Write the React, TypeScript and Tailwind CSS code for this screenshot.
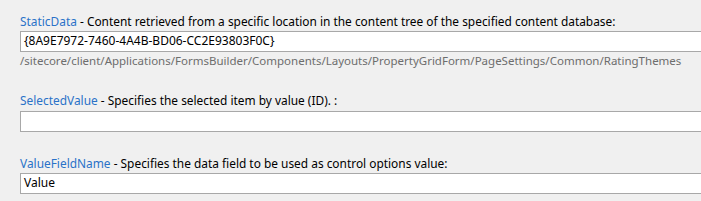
import React from 'react';

type Field = {
  name: string;
  description: string;
  value: string;
  hint?: string;
};

const fields: Field[] = [
  {
    name: 'StaticData',
    description: 'Content retrieved from a specific location in the content tree of the specified content database',
    value: '{8A9E7972-7460-4A4B-BD06-CC2E93803F0C}',
    hint: '/sitecore/client/Applications/FormsBuilder/Components/Layouts/PropertyGridForm/PageSettings/Common/RatingThemes',
  },
  {
    name: 'SelectedValue',
    description: 'Specifies the selected item by value (ID). ',
    value: '',
  },
  {
    name: 'ValueFieldName',
    description: 'Specifies the data field to be used as control options value',
    value: 'Value',
  },
];

function FieldRow({ field, className, gap }: { field: Field; className?: string; gap: string }) {
  return (
    <div className={className}>
      <div className="h-[14px] leading-[14px] whitespace-nowrap text-[11.9px] text-[#000]">
        <span className="text-[#2a72c8]">{field.name}</span>
        <span> - {field.description}:</span>
      </div>
      <div
        className={`${gap} h-[21px] border border-r-0 border-[#a8a8a8] bg-white pl-[3px] leading-[18px] text-[12px] text-[#000] whitespace-nowrap`}
      >
        {field.value}
      </div>
      {field.hint && (
        <div className="mt-[2px] h-[14px] leading-[14px] whitespace-nowrap text-[11.5px] text-[#6d6d6d]">
          {field.hint}
        </div>
      )}
    </div>
  );
}

export default function App() {
  return (
    <div
      className="h-[201px] w-[701px] overflow-hidden bg-[#f0f0f0] pl-[20px] pt-[14px]"
      style={{ fontFamily: '"Noto Sans", "Open Sans", sans-serif' }}
    >
      <FieldRow field={fields[0]} gap="mt-[3px]" />
      <FieldRow field={fields[1]} gap="mt-[4px]" className="mt-[25px]" />
      <FieldRow field={fields[2]} gap="mt-[3px]" className="mt-[24px]" />
    </div>
  );
}
